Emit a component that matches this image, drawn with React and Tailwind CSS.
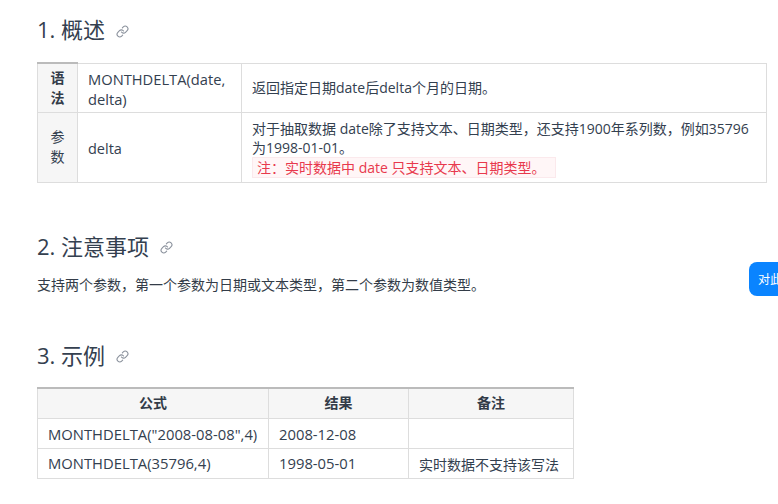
import React from "react";

const Link = () => (
  <svg width="13" height="13" viewBox="0 0 24 24" fill="none" stroke="#8a919c" strokeWidth="2" strokeLinecap="round" strokeLinejoin="round" className="ml-[11px] mt-[4px] shrink-0">
    <path d="M10 13a5 5 0 0 0 7.54.54l3-3a5 5 0 0 0-7.07-7.07l-1.72 1.71" />
    <path d="M14 11a5 5 0 0 0-7.54-.54l-3 3a5 5 0 0 0 7.07 7.07l1.71-1.71" />
  </svg>
);

const Heading = ({ children, className }) => (
  <h2 className={"flex items-center text-[22px] leading-[30px] font-normal text-[#34404f] " + className}>
    {children}
    <Link />
  </h2>
);

const cell = "border border-[#dddddd] px-[10px] align-middle";
const head = "border border-[#dddddd] bg-[#f6f6f6] px-[10px] text-center align-middle text-[14px] font-bold text-[#333c48]";

export default function App() {
  return (
    <div className="relative h-[504px] w-[778px] overflow-hidden bg-white pl-[37px] pr-[11px] pt-[14px] text-[14px] leading-[22px] text-[#33404f] [font-family:'Open_Sans','Noto_Sans_CJK_SC',sans-serif]">
      <Heading>1. 概述</Heading>

      <table className="mt-[18px] w-[729px] table-fixed border-collapse">
        <colgroup>
          <col className="w-[40px]" />
          <col className="w-[164px]" />
          <col className="w-[525px]" />
        </colgroup>
        <tbody>
          <tr className="h-[49px]">
            <th className={head + " border-t-2 border-t-[#bbbbbb] leading-[20px]"}>语法</th>
            <td className={cell + " pt-[2px] text-[14.7px] leading-[20px]"}>MONTHDELTA(date, delta)</td>
            <td className={cell}>返回指定日期date后delta个月的日期。</td>
          </tr>
          <tr className="h-[70px]">
            <td className="border border-[#dddddd] bg-[#f6f6f6] px-[10px] text-center align-middle text-[14px] leading-[20px]">参数</td>
            <td className={cell + " pt-[3px] text-[14.5px]"}>delta</td>
            <td className={cell + " pt-[3px] leading-[19px]"}>
              <div>对于抽取数据 date除了支持文本、日期类型，还支持1900年系列数，例如35796为1998-01-01。</div>
              <div className="inline-block h-[21px] w-[304px] border border-[#fbe9ec] bg-[#fff6f7] pl-[4px] leading-[19px] text-[#e8394d]">
                注：实时数据中 date 只支持文本、日期类型。
              </div>
            </td>
          </tr>
        </tbody>
      </table>

      <Heading className="mt-[48px]">2. 注意事项</Heading>
      <p className="mt-[14px] text-[14px] leading-[20px] text-[#333c48]">支持两个参数，第一个参数为日期或文本类型，第二个参数为数值类型。</p>

      <Heading className="mt-[45px]">3. 示例</Heading>

      <table className="mt-[17px] w-[536px] table-fixed border-collapse">
        <colgroup>
          <col className="w-[231px]" />
          <col className="w-[140px]" />
          <col className="w-[165px]" />
        </colgroup>
        <thead>
          <tr className="h-[31px]">
            <th className={head + " border-t-2 border-t-[#bbbbbb]"}>公式</th>
            <th className={head + " border-t-2 border-t-[#bbbbbb]"}>结果</th>
            <th className={head + " border-t-2 border-t-[#bbbbbb]"}>备注</th>
          </tr>
        </thead>
        <tbody>
          <tr className="h-[30px]">
            <td className={cell + " text-[14.8px]"}>MONTHDELTA("2008-08-08",4)</td>
            <td className={cell + " text-[14.8px]"}>2008-12-08</td>
            <td className={cell}></td>
          </tr>
          <tr className="h-[30px]">
            <td className={cell + " pb-[1px] text-[14.8px]"}>MONTHDELTA(35796,4)</td>
            <td className={cell + " pb-[1px] text-[14.8px]"}>1998-05-01</td>
            <td className={cell + " pt-[3px]"}>实时数据不支持该写法</td>
          </tr>
        </tbody>
      </table>

      <div className="absolute left-[749px] top-[262px] flex h-[34px] w-[60px] items-center rounded-[8px] bg-[#0a84ff] pl-[9px] pt-px text-[12px] text-white">
        对此
      </div>
    </div>
  );
}
